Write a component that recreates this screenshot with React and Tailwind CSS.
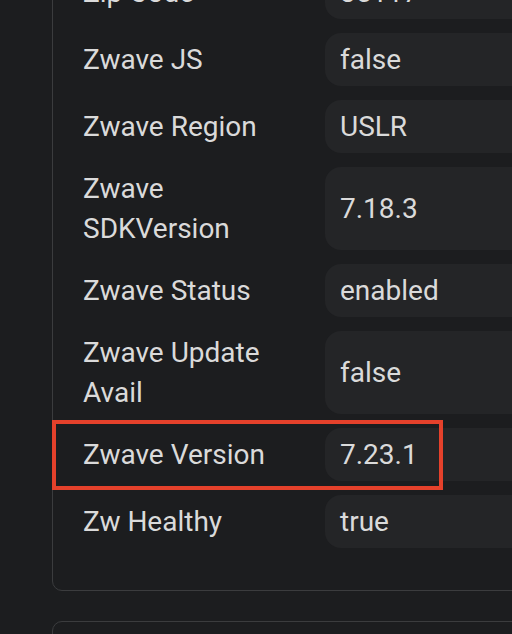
const rows = [
  { label: "Zip Code", value: "35117" },
  { label: "Zwave JS", value: "false" },
  { label: "Zwave Region", value: "USLR" },
  { label: ["Zwave", "SDKVersion"], value: "7.18.3" },
  { label: "Zwave Status", value: "enabled" },
  { label: ["Zwave Update", "Avail"], value: "false" },
  { label: "Zwave Version", value: "7.23.1", highlight: true },
  { label: "Zw Healthy", value: "true" },
];

function Row({ label, value, highlight }) {
  const lines = Array.isArray(label) ? label : [label];
  return (
    <div className="relative flex items-stretch">
      {highlight && (
        <div className="pointer-events-none absolute left-[-31px] top-[-8px] h-[70px] w-[391px] border-[4px] border-[#e5412b]" />
      )}
      <div className="w-[242px] shrink-0 py-[1.5px] flex flex-col justify-center">
        {lines.map((l) => (
          <div key={l} className="leading-[40px]">
            {l}
          </div>
        ))}
      </div>
      <div className="flex-1 min-h-[53px] rounded-[16px] bg-[#242527] pl-[15px] flex items-center leading-[40px]">
        {value}
      </div>
    </div>
  );
}

export default function App() {
  return (
    <div
      className="h-[634px] w-[512px] overflow-hidden bg-[#1c1d1f] text-[28px] text-[#dadada]"
      style={{ fontFamily: "Roboto, 'Noto Sans', sans-serif" }}
    >
      <div className="ml-[52px] w-[520px]">
        {/* Device details card */}
        <div className="-mt-[55px] rounded-[10px] border border-[#3b3c3e] pl-[30px] pt-[20px] pb-[42px]">
          <div className="flex flex-col gap-[14px]">
            {rows.map((r) => (
              <Row key={r.value + r.label} {...r} />
            ))}
          </div>
        </div>

        {/* Next card */}
        <div className="mt-[30px] h-[80px] rounded-[10px] border border-[#3b3c3e]" />
      </div>
    </div>
  );
}
